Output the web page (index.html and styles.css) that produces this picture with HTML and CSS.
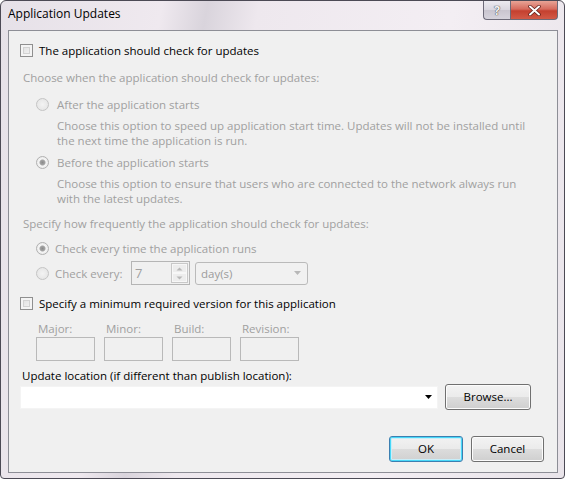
FILE: index.html
```html
<!DOCTYPE html>
<html lang="en">
<head>
    <meta charset="UTF-8">
    <title>Application Updates</title>
    <link rel="stylesheet" href="styles.css">
</head>
<body>
    <div class="window">
        <div class="titlebar">
            <div class="title">Application Updates</div>
            <div class="caption-buttons">
                <div class="cap-btn help">?</div>
                <div class="cap-btn close">
                    <svg width="13" height="11" viewBox="0 0 13 11">
                        <path d="M2 1.5 L11 9.5 M11 1.5 L2 9.5" stroke="#5a1b16" stroke-width="3.4" stroke-linecap="round"/>
                        <path d="M2 1.5 L11 9.5 M11 1.5 L2 9.5" stroke="#fff" stroke-width="2" stroke-linecap="round"/>
                    </svg>
                </div>
            </div>
        </div>

        <div class="client">
            <label class="check-row">
                <span class="checkbox"></span>
                <span>The application should check for updates</span>
            </label>

            <div class="group-label disabled">Choose when the application should check for updates:</div>

            <div class="radio-row first disabled">
                <span class="radio"></span>
                <span>After the application starts</span>
            </div>
            <div class="desc disabled">Choose this option to speed up application start time. Updates will not be installed until<br>the next time the application is run.</div>

            <div class="radio-row second disabled">
                <span class="radio checked"></span>
                <span>Before the application starts</span>
            </div>
            <div class="desc disabled">Choose this option to ensure that users who are connected to the network always run<br>with the latest updates.</div>

            <div class="group-label freq disabled">Specify how frequently the application should check for updates:</div>

            <div class="radio-row freq-row disabled">
                <span class="radio checked"></span>
                <span>Check every time the application runs</span>
            </div>

            <div class="every-row disabled">
                <span class="radio"></span>
                <span class="every-label">Check every:</span>
                <div class="spin">
                    <span class="spin-value">7</span>
                    <div class="spin-buttons">
                        <span class="spin-btn"><svg width="7" height="4" viewBox="0 0 7 4"><path d="M0.5 3.5 L3.5 0.5 L6.5 3.5 Z" fill="#b8b8b8"/></svg></span>
                        <span class="spin-btn"><svg width="7" height="4" viewBox="0 0 7 4"><path d="M0.5 0.5 L3.5 3.5 L6.5 0.5 Z" fill="#b8b8b8"/></svg></span>
                    </div>
                </div>
                <div class="combo small">
                    <span>day(s)</span>
                    <svg width="7" height="4" viewBox="0 0 7 4"><path d="M0 0 L7 0 L3.5 4 Z" fill="#b8b8b8"/></svg>
                </div>
            </div>

            <label class="check-row version-check">
                <span class="checkbox"></span>
                <span>Specify a minimum required version for this application</span>
            </label>

            <div class="version-grid disabled">
                <div class="version-field"><span>Major:</span><div class="box"></div></div>
                <div class="version-field"><span>Minor:</span><div class="box"></div></div>
                <div class="version-field"><span>Build:</span><div class="box"></div></div>
                <div class="version-field"><span>Revision:</span><div class="box"></div></div>
            </div>

            <div class="location-label">Update location (if different than publish location):</div>
            <div class="location-row">
                <div class="combo location">
                    <span></span>
                    <svg width="7" height="4" viewBox="0 0 7 4"><path d="M0 0 L7 0 L3.5 4 Z" fill="#000"/></svg>
                </div>
                <div class="button browse">Browse...</div>
            </div>

            <div class="footer">
                <div class="button default">OK</div>
                <div class="button">Cancel</div>
            </div>
        </div>
    </div>
</body>
</html>
```

FILE: styles.css
```css
body {
    margin: 0;
    background: #ffffff;
    font-family: 'Segoe UI', 'Open Sans', sans-serif;
    font-size: 11.5px;
    color: #000;
}

.window {
    width: 565px;
    height: 479px;
    box-sizing: border-box;
    border: 1px solid #4c4a55;
    border-radius: 6px 6px 4px 4px;
    background: linear-gradient(100deg, #e6e1e8 0%, #efe9ef 25%, #d9d4dc 32%, #eee8ee 40%, #f3eef3 70%, #e9e4ea 100%);
    display: flex;
    flex-direction: column;
}

.titlebar {
    height: 29px;
    display: flex;
    justify-content: space-between;
    align-items: flex-start;
    padding: 0 6px 0 7px;
}

.title {
    padding-top: 5px;
    line-height: 16px;
    font-size: 12px;
}

.caption-buttons {
    display: flex;
}

.cap-btn {
    height: 19px;
    box-sizing: border-box;
    border: 1px solid #6d6a78;
    border-top: none;
    display: flex;
    align-items: center;
    justify-content: center;
}

.help {
    width: 27px;
    border-right: none;
    border-radius: 0 0 0 4px;
    background: linear-gradient(#eceaf0 0%, #d9d6df 50%, #c9c5cf 51%, #d6d3dc 100%);
    color: #f6f6f6;
    font-weight: bold;
    font-size: 12px;
    text-shadow: 0 0 1px #3b3b3b, 0 0 1px #3b3b3b;
}

.close {
    width: 48px;
    border-radius: 0 0 4px 0;
    background: linear-gradient(#e8a496 0%, #d66b5d 45%, #c4402f 55%, #d25a47 100%);
}

.client {
    flex: 1;
    margin: 0 6px 5px 7px;
    border: 1px solid #8d8e96;
    background: #f0f0f0;
    padding: 12px 13px 0 11px;
    line-height: 15px;
}

.disabled {
    color: #a0a0a0;
}

.check-row {
    display: flex;
    align-items: center;
    height: 15px;
}

.checkbox {
    width: 13px;
    height: 13px;
    box-sizing: border-box;
    border: 1px solid #8f8f8f;
    background: linear-gradient(135deg, #dcdcdc, #f7f7f7);
    box-shadow: inset 0 0 0 2px #f4f4f4, inset 0 0 0 3px #d2d2d2;
    margin-right: 6px;
}

.group-label {
    margin-top: 12px;
    padding-left: 3px;
}

.radio-row {
    display: flex;
    align-items: center;
    height: 15px;
    padding-left: 16px;
}

.radio-row.first {
    margin-top: 12px;
}

.radio-row.second {
    margin-top: 7px;
}

.radio {
    width: 13px;
    height: 13px;
    box-sizing: border-box;
    border-radius: 50%;
    border: 1px solid #c4c4c4;
    background: radial-gradient(circle at 50% 50%, #f3f3f3 0%, #e2e2e2 100%);
    margin-right: 8px;
    flex: none;
}

.radio.checked {
    background: radial-gradient(circle, #8a8a8a 0, #a5a5a5 2.5px, #f5f5f5 3.5px, #e2e2e2 100%);
    border-color: #b0b0b0;
}

.desc {
    margin-top: 6px;
    padding-left: 37px;
    white-space: nowrap;
}

.group-label.freq {
    margin-top: 10px;
}

.freq-row {
    margin-top: 10px;
}

.freq-row .radio,
.every-row .radio {
    margin-right: 6px;
}

.every-row {
    display: flex;
    align-items: center;
    height: 24px;
    margin-top: 5px;
    padding-left: 16px;
}

.every-label {
    width: 76px;
}

.spin {
    width: 59px;
    height: 24px;
    box-sizing: border-box;
    border: 1px solid #b5b5b5;
    display: flex;
    justify-content: space-between;
    padding: 1px 1px 1px 3px;
}

.spin-value {
    line-height: 20px;
    font-size: 13px;
}

.spin-buttons {
    display: flex;
    flex-direction: column;
    width: 15px;
    border: 1px solid #c8c8c8;
}

.spin-btn {
    flex: 1;
    display: flex;
    align-items: center;
    justify-content: center;
    border: 1px solid #f7f7f7;
    background: #ededed;
}

.combo {
    box-sizing: border-box;
    display: flex;
    align-items: center;
    justify-content: space-between;
}

.combo.small {
    width: 113px;
    height: 23px;
    margin-left: 5px;
    border: 1px solid #bababa;
    border-radius: 3px;
    padding: 0 6px 0 5px;
    color: #9c9c9c;
    background: #f1f1f1;
}

.version-check {
    margin-top: 11px;
}

.version-grid {
    display: flex;
    margin-top: 10px;
    padding-left: 16px;
    gap: 9px;
}

.version-field span {
    display: block;
    padding-left: 2px;
    line-height: 15px;
}

.version-field .box {
    width: 59px;
    height: 24px;
    box-sizing: border-box;
    margin-top: 1px;
    border: 1px solid #b9b9b9;
}

.location-label {
    margin-top: 7px;
    padding-left: 2px;
}

.location-row {
    margin-top: 1px;
    display: flex;
    align-items: center;
    justify-content: space-between;
    height: 26px;
    padding-right: 13px;
}

.combo.location {
    width: 418px;
    height: 23px;
    background: #ffffff;
    border: 1px solid #f4f4f4;
    padding: 0 5px 0 3px;
}

.button {
    width: 73px;
    height: 26px;
    box-sizing: border-box;
    border: 1px solid #707070;
    border-radius: 3px;
    background: linear-gradient(#f3f3f3 0%, #ebebeb 49%, #dddddd 50%, #cfcfcf 100%);
    box-shadow: inset 0 0 0 1px #fcfcfc;
    text-align: center;
    line-height: 23px;
}

.button.browse {
    width: 86px;
}

.footer {
    display: flex;
    justify-content: flex-end;
    gap: 8px;
    margin-top: 26px;
}

.button.default {
    width: 74px;
    border-color: #3c7fb1;
    box-shadow: inset 0 0 0 1px #48d8f8, inset 0 0 0 2px #c9eef9;
    background: linear-gradient(#f2f2f2 0%, #eaeaea 49%, #dcdcdc 50%, #d0d0d0 100%);
}
```
